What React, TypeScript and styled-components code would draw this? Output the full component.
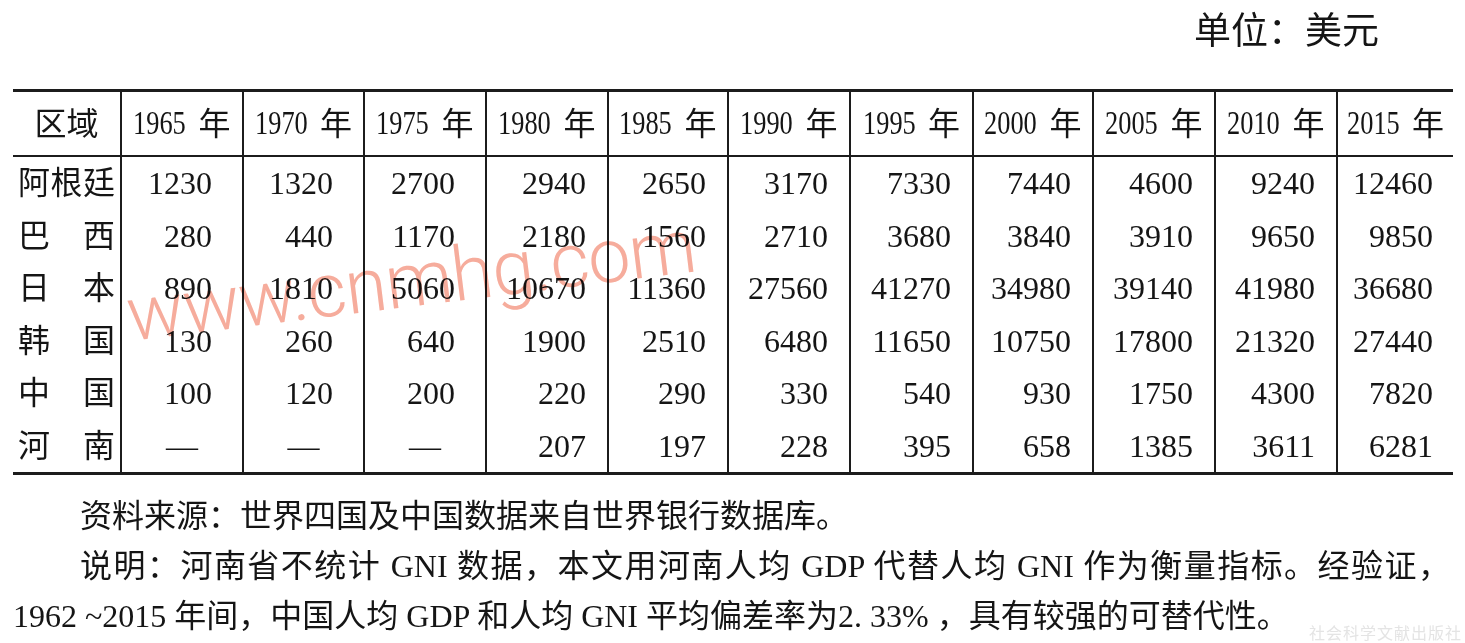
import React from "react";
import styled, { createGlobalStyle } from "styled-components";

const GlobalStyle = createGlobalStyle`
  html, body { margin: 0; padding: 0; background: #ffffff; }
  body {
    font-family: "Liberation Serif", "Noto Sans CJK SC", serif;
    color: #151515;
  }
`;

const COLS = [107, 122, 121, 122, 122, 120, 122, 123, 120, 122, 122, 117];
const RULE = "#1c1c1c";

const Page = styled.div`
  position: relative;
  width: 1465px;
  height: 643px;
  overflow: hidden;
  box-sizing: border-box;
  padding: 0 12px 0 13px;
  font-family: "Liberation Serif", "Noto Sans CJK SC", serif;
`;

const UnitBar = styled.div`
  height: 89px;
  box-sizing: border-box;
  padding: 12px 74px 0 0;
  display: flex;
  justify-content: flex-end;
  align-items: flex-start;
  font-size: 37px;
  line-height: 40px;
`;

const Table = styled.div`
  display: grid;
  grid-template-columns: ${COLS.map((c) => `${c}px`).join(" ")};
  grid-template-rows: 65px repeat(6, 52.5px);
  border-top: 3px solid ${RULE};
  border-bottom: 3px solid ${RULE};
  font-size: 32px;
  line-height: 1;
`;

const Cell = styled.div<{ $first?: boolean }>`
  box-sizing: border-box;
  display: flex;
  align-items: center;
  white-space: nowrap;
  border-left: ${(p) => (p.$first ? "none" : `2px solid ${RULE}`)};
`;

const HeadCell = styled(Cell)`
  justify-content: center;
  border-bottom: 2px solid ${RULE};
`;

const HeadYear = styled.span`
  display: inline-block;
  font-size: 33px;
  transform: scaleX(0.8);
  transform-origin: left center;
  margin-right: -1px;
`;

const LabelCell = styled(Cell)`
  justify-content: space-between;
  padding: 0 5px 0 5px;
`;

const NumCell = styled(Cell)<{ $pad: number; $center?: boolean }>`
  justify-content: ${(p) => (p.$center ? "center" : "flex-end")};
  padding-right: ${(p) => (p.$center ? 0 : p.$pad)}px;
`;

const Notes = styled.div`
  padding-top: 16px;
  font-size: 32px;
  line-height: 50px;
`;

const NoteLine = styled.div<{ $indent?: boolean; $justify?: boolean }>`
  white-space: nowrap;
  padding-left: ${(p) => (p.$indent ? 67 : 0)}px;
  padding-right: ${(p) => (p.$justify ? 3 : 0)}px;
  text-align: ${(p) => (p.$justify ? "justify" : "left")};
  text-align-last: ${(p) => (p.$justify ? "justify" : "auto")};
`;

const Watermark = styled.div`
  position: absolute;
  left: 130px;
  top: 277px;
  font-family: Roboto, "Liberation Sans", sans-serif;
  font-weight: 300;
  font-size: 76px;
  line-height: 76px;
  letter-spacing: -1px;
  color: rgb(246, 172, 156);
  mix-blend-mode: multiply;
  transform-origin: 0 64px;
  transform: rotate(-7deg);
  white-space: nowrap;
  pointer-events: none;
`;

const Stamp = styled.div`
  position: absolute;
  right: 3px;
  bottom: 3px;
  font-family: "Noto Sans CJK SC", sans-serif;
  font-size: 16px;
  line-height: 16px;
  color: #e4e4e4;
  letter-spacing: 1px;
  pointer-events: none;
`;

const YEARS = ["1965", "1970", "1975", "1980", "1985", "1990", "1995", "2000", "2005", "2010", "2015"];

type Row = { label: string[]; values: (string | null)[] };

const ROWS: Row[] = [
  { label: ["阿", "根", "廷"], values: ["1230", "1320", "2700", "2940", "2650", "3170", "7330", "7440", "4600", "9240", "12460"] },
  { label: ["巴", "西"], values: ["280", "440", "1170", "2180", "1560", "2710", "3680", "3840", "3910", "9650", "9850"] },
  { label: ["日", "本"], values: ["890", "1810", "5060", "10670", "11360", "27560", "41270", "34980", "39140", "41980", "36680"] },
  { label: ["韩", "国"], values: ["130", "260", "640", "1900", "2510", "6480", "11650", "10750", "17800", "21320", "27440"] },
  { label: ["中", "国"], values: ["100", "120", "200", "220", "290", "330", "540", "930", "1750", "4300", "7820"] },
  { label: ["河", "南"], values: [null, null, null, "207", "197", "228", "395", "658", "1385", "3611", "6281"] },
];

const PADS = [30, 30, 30, 21, 21, 21, 21, 21, 21, 21, 20];

export default function App() {
  return (
    <>
      <GlobalStyle />
      <Page>
        <UnitBar>单位：美元</UnitBar>
        <Table>
          <HeadCell $first>区域</HeadCell>
          {YEARS.map((y) => (
            <HeadCell key={y}>
              <HeadYear>{y}</HeadYear> 年
            </HeadCell>
          ))}
          {ROWS.map((row) => (
            <React.Fragment key={row.label.join("")}>
              <LabelCell $first>
                {row.label.map((ch, i) => (
                  <span key={i}>{ch}</span>
                ))}
              </LabelCell>
              {row.values.map((v, i) => (
                <NumCell key={i} $pad={PADS[i]} $center={v === null}>
                  {v === null ? "—" : v}
                </NumCell>
              ))}
            </React.Fragment>
          ))}
        </Table>
        <Notes>
          <NoteLine $indent>资料来源：世界四国及中国数据来自世界银行数据库。</NoteLine>
          <NoteLine $indent $justify>
            说明：河南省不统计 GNI 数据，本文用河南人均 GDP 代替人均 GNI 作为衡量指标。经验证，
          </NoteLine>
          <NoteLine>1962 ~2015 年间，中国人均 GDP 和人均 GNI 平均偏差率为2. 33% ，具有较强的可替代性。</NoteLine>
        </Notes>
        <Watermark>www.cnmhg.com</Watermark>
        <Stamp>社会科学文献出版社</Stamp>
      </Page>
    </>
  );
}
